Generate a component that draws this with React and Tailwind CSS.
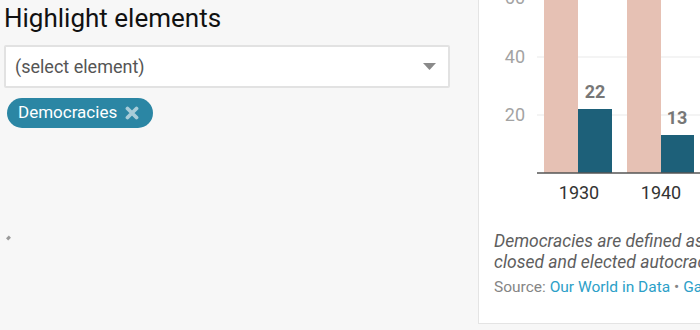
export default function App() {
  return (
    <div className="w-[700px] h-[330px] overflow-hidden bg-[#f7f7f7] flex" style={{ fontFamily: "Roboto, 'Liberation Sans', sans-serif" }}>
      <div className="w-[478px] shrink-0 pl-[4px] pr-[28px]">
        <h2 className="text-[26px] leading-[30px] pt-[3px] text-[#111]">Highlight elements</h2>
        <div className="mt-[12px] h-[43px] bg-white border-2 border-[#e2e2e2] rounded-[2px] flex items-center justify-between pl-[9px] pr-[12px]">
          <span className="text-[18px] text-[#555]">(select element)</span>
          <svg width="13" height="8" viewBox="0 0 13 8"><path d="M0 0 L13 0 L6.5 7 Z" fill="#8a8a8a" /></svg>
        </div>
        <div className="mt-[10px] ml-[3px] inline-flex items-center h-[30px] rounded-full bg-[#2b86a4] pl-[11px] pr-[14px] gap-[8px]">
          <span className="text-[17px] text-white">Democracies</span>
          <svg width="14" height="14" viewBox="0 0 14 14">
            <path d="M2.5 2.5 L11.5 11.5 M11.5 2.5 L2.5 11.5" stroke="#a8ccd8" strokeWidth="3.8" strokeLinecap="round" />
          </svg>
        </div>
        <div className="mt-[108px] ml-[3px] w-[3px] h-[4px] bg-[#9a9a9a] rotate-45"></div>
      </div>
      <div className="w-[300px] shrink-0 mt-[-3px] h-[327px] bg-white border border-[#e4e4e4] flex flex-col">
        <svg width="299" height="205" className="block shrink-0">
          <g fontFamily="Roboto, 'Liberation Sans', sans-serif">
            <line x1="58" x2="299" y1="1" y2="1" stroke="#e9e9e9" />
            <line x1="58" x2="299" y1="59" y2="59" stroke="#e9e9e9" />
            <line x1="58" x2="299" y1="117" y2="117" stroke="#e9e9e9" />
            <text x="46" y="1" textAnchor="end" dominantBaseline="middle" fontSize="18" fill="#a3a3a3">60</text>
            <text x="46" y="60" textAnchor="end" dominantBaseline="middle" fontSize="18" fill="#a3a3a3">40</text>
            <text x="46" y="118" textAnchor="end" dominantBaseline="middle" fontSize="18" fill="#a3a3a3">20</text>
            <rect x="65" y="0" width="34" height="175" fill="#e6c1b4" />
            <rect x="99" y="111" width="34" height="64" fill="#1d6079" />
            <rect x="148" y="0" width="34" height="175" fill="#e6c1b4" />
            <rect x="182" y="137" width="33" height="38" fill="#1d6079" />
            <line x1="58" x2="299" y1="175" y2="175" stroke="#555" strokeWidth="1.5" />
            <text x="116" y="100" textAnchor="middle" fontSize="18" fontWeight="bold" fill="#777">22</text>
            <text x="198" y="126" textAnchor="middle" fontSize="18" fontWeight="bold" fill="#777">13</text>
            <text x="100" y="201" textAnchor="middle" fontSize="18" fill="#333">1930</text>
            <text x="182" y="201" textAnchor="middle" fontSize="18" fill="#333">1940</text>
          </g>
        </svg>
        <div className="pl-[15px] pt-[28px] whitespace-nowrap">
          <p className="italic text-[17.5px] leading-[21px] text-[#5e5e5e]">Democracies are defined as countries where</p>
          <p className="italic text-[17.5px] leading-[21px] text-[#5e5e5e]">closed and elected autocracies are</p>
          <p className="text-[15.5px] leading-[20px] mt-[4px] text-[#858585]">Source: <span className="text-[#2ca0c8]">Our World in Data</span> • <span className="text-[#2ca0c8]">Gapminder</span></p>
        </div>
      </div>
    </div>
  );
}
